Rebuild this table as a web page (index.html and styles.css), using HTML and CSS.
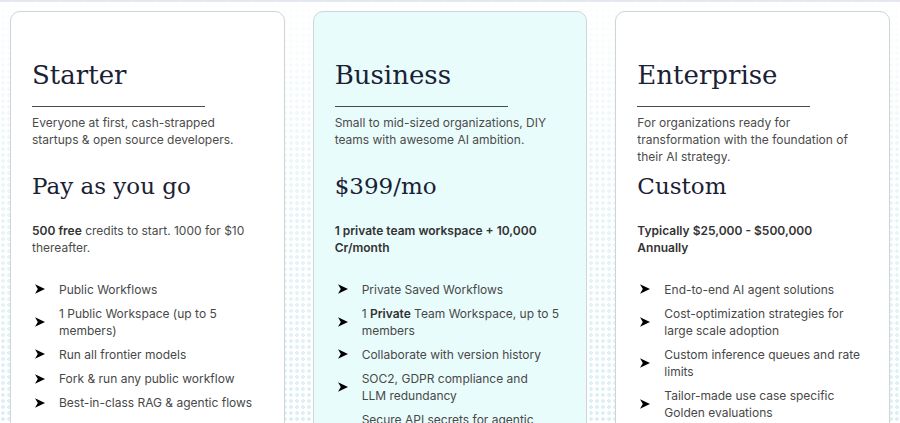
FILE: index.html
```html
<!DOCTYPE html>
<html lang="en">
<head>
<meta charset="utf-8">
<title>Pricing</title>
<link rel="stylesheet" href="styles.css">
</head>
<body>
<div class="page">
  <div class="plans">
    <section class="card">
      <h2 class="title">Starter</h2>
      <hr class="rule">
      <p class="desc">Everyone at first, cash-strapped startups &amp; open source developers.</p>
      <div class="price">Pay as you go</div>
      <p class="detail"><b>500 free</b> credits to start. 1000 for $10 thereafter.</p>
      <ul class="features">
        <li><svg class="arrow" viewBox="0 0 10 10"><path d="M0 0.3 L10 5 L0 9.7 L2.8 5 Z"/></svg><span>Public Workflows</span></li>
        <li><svg class="arrow" viewBox="0 0 10 10"><path d="M0 0.3 L10 5 L0 9.7 L2.8 5 Z"/></svg><span>1 Public Workspace (up to 5 members)</span></li>
        <li><svg class="arrow" viewBox="0 0 10 10"><path d="M0 0.3 L10 5 L0 9.7 L2.8 5 Z"/></svg><span>Run all frontier models</span></li>
        <li><svg class="arrow" viewBox="0 0 10 10"><path d="M0 0.3 L10 5 L0 9.7 L2.8 5 Z"/></svg><span>Fork &amp; run any public workflow</span></li>
        <li><svg class="arrow" viewBox="0 0 10 10"><path d="M0 0.3 L10 5 L0 9.7 L2.8 5 Z"/></svg><span>Best-in-class RAG &amp; agentic flows</span></li>
      </ul>
    </section>
    <section class="card featured">
      <h2 class="title">Business</h2>
      <hr class="rule">
      <p class="desc">Small to mid-sized organizations, DIY teams with awesome AI ambition.</p>
      <div class="price">$399/mo</div>
      <p class="detail strong">1 private team workspace + 10,000 Cr/month</p>
      <ul class="features">
        <li><svg class="arrow" viewBox="0 0 10 10"><path d="M0 0.3 L10 5 L0 9.7 L2.8 5 Z"/></svg><span>Private Saved Workflows</span></li>
        <li><svg class="arrow" viewBox="0 0 10 10"><path d="M0 0.3 L10 5 L0 9.7 L2.8 5 Z"/></svg><span>1 <b>Private</b> Team Workspace, up to 5 members</span></li>
        <li><svg class="arrow" viewBox="0 0 10 10"><path d="M0 0.3 L10 5 L0 9.7 L2.8 5 Z"/></svg><span>Collaborate with version history</span></li>
        <li><svg class="arrow" viewBox="0 0 10 10"><path d="M0 0.3 L10 5 L0 9.7 L2.8 5 Z"/></svg><span>SOC2, GDPR compliance and<br>LLM redundancy</span></li>
        <li><svg class="arrow" viewBox="0 0 10 10"><path d="M0 0.3 L10 5 L0 9.7 L2.8 5 Z"/></svg><span>Secure API secrets for agentic workflows</span></li>
      </ul>
    </section>
    <section class="card">
      <h2 class="title">Enterprise</h2>
      <hr class="rule">
      <p class="desc">For organizations ready for transformation with the foundation of their AI strategy.</p>
      <div class="price">Custom</div>
      <p class="detail strong">Typically $25,000 - $500,000 Annually</p>
      <ul class="features">
        <li><svg class="arrow" viewBox="0 0 10 10"><path d="M0 0.3 L10 5 L0 9.7 L2.8 5 Z"/></svg><span>End-to-end AI agent solutions</span></li>
        <li><svg class="arrow" viewBox="0 0 10 10"><path d="M0 0.3 L10 5 L0 9.7 L2.8 5 Z"/></svg><span>Cost-optimization strategies for large scale adoption</span></li>
        <li><svg class="arrow" viewBox="0 0 10 10"><path d="M0 0.3 L10 5 L0 9.7 L2.8 5 Z"/></svg><span>Custom inference queues and rate limits</span></li>
        <li><svg class="arrow" viewBox="0 0 10 10"><path d="M0 0.3 L10 5 L0 9.7 L2.8 5 Z"/></svg><span>Tailor-made use case specific Golden evaluations</span></li>
        <li><svg class="arrow" viewBox="0 0 10 10"><path d="M0 0.3 L10 5 L0 9.7 L2.8 5 Z"/></svg><span>Dedicated support</span></li>
      </ul>
    </section>
  </div>
</div>
</body>
</html>
```

FILE: styles.css
```css
html, body {
  margin: 0;
  padding: 0;
  height: 100%;
  overflow: hidden;
  background: #ffffff;
}

.page {
  height: 100%;
  box-sizing: border-box;
  border-top: 2px solid #e6e8f0;
  padding: 9px 10px 0;
  background-color: #ffffff;
  background-image:
    linear-gradient(to bottom, rgba(255,255,255,0.95) 0%, rgba(255,255,255,0.5) 40%, rgba(255,255,255,0.15) 100%),
    radial-gradient(circle, #d6eef2 1.6px, transparent 2px);
  background-size: 100% 100%, 6px 6px;
  font-family: Inter, "Noto Sans", sans-serif;
  color: #454545;
}

.plans {
  display: grid;
  grid-template-columns: repeat(3, 1fr);
  gap: 28px;
  height: 100%;
}

.card {
  background: #ffffff;
  border: 1px solid #cfd4d9;
  border-radius: 10px;
  padding: 47px 21px 0;
  min-height: 520px;
}

.card.featured {
  background: #e9fcfc;
}

.title {
  margin: 0;
  font-family: "DejaVu Serif", serif;
  font-weight: normal;
  font-size: 26px;
  line-height: 32px;
  color: #1b2134;
}

.rule {
  margin: 15px 0 0;
  border: 0;
  border-top: 1px solid #4a4a4a;
  width: 173px;
}

.desc {
  margin: 7px 0 0;
  min-height: 51px;
  font-size: 12px;
  line-height: 17px;
  color: #4b4b4b;
}

.price {
  margin-top: 5px;
  font-family: "DejaVu Serif", serif;
  font-size: 23px;
  line-height: 32px;
  color: #1b2134;
}

.detail {
  margin: 20px 0 0;
  max-width: 220px;
  font-size: 12px;
  line-height: 17px;
  color: #4b4b4b;
}

.detail b,
.detail.strong {
  font-weight: 600;
  color: #333333;
}

.features {
  list-style: none;
  margin: 24.5px 0 0;
  padding: 0;
  display: flex;
  flex-direction: column;
  gap: 7.2px;
}

.features li {
  display: flex;
  align-items: center;
  font-size: 12px;
  line-height: 17px;
  color: #484848;
}

.features li b {
  font-weight: 600;
  color: #333333;
}

.arrow {
  flex: none;
  width: 10px;
  height: 10px;
  margin: 0 14px 0 3px;
  fill: #000000;
}
```
